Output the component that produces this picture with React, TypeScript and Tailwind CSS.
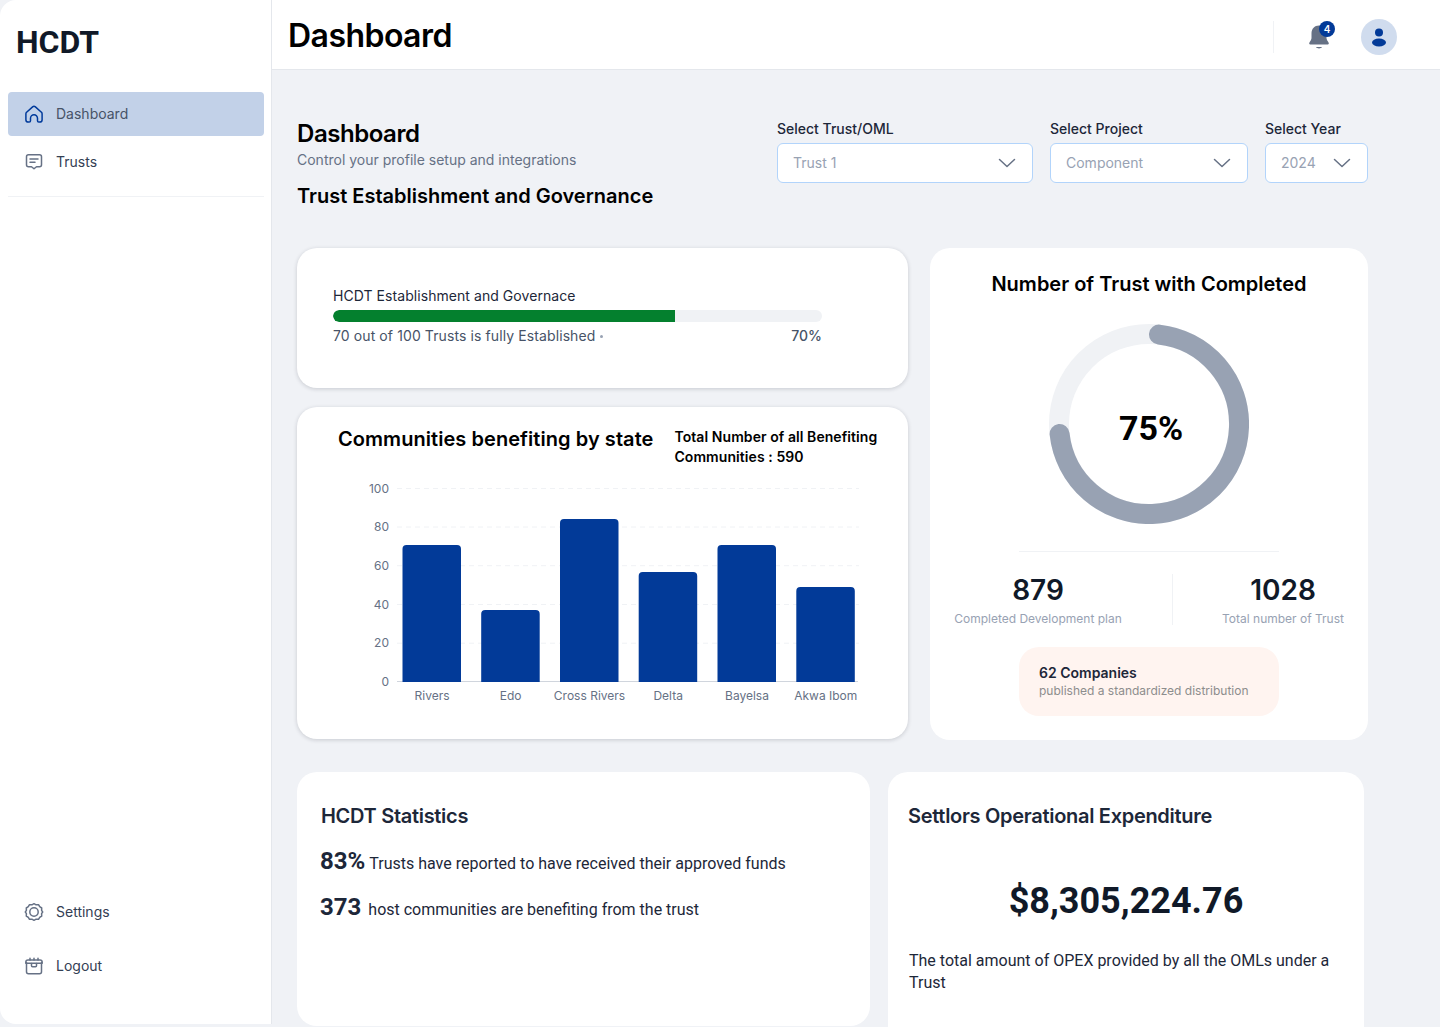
import React from 'react';

const bars = [
  { name: 'Rivers', x: 402.5, top: 545 },
  { name: 'Edo', x: 481.2, top: 610 },
  { name: 'Cross Rivers', x: 560, top: 519 },
  { name: 'Delta', x: 638.7, top: 572 },
  { name: 'Bayelsa', x: 717.5, top: 545 },
  { name: 'Akwa Ibom', x: 796.3, top: 587 },
];

const ticks = [
  { label: '100', y: 488.5 },
  { label: '80', y: 527 },
  { label: '60', y: 565.7 },
  { label: '40', y: 604.5 },
  { label: '20', y: 643.2 },
];

function HomeIcon() {
  return (
    <svg width="20" height="20" viewBox="0 0 20 20" fill="none" stroke="#003A9B" strokeWidth="1.5" strokeLinejoin="round">
      <path d="M2.6 8.2 8.6 2.9a2.1 2.1 0 0 1 2.8 0l6 5.3c.5.4.7.9.7 1.5v6c0 1.4-1 2.4-2.3 2.4h-1c-.8 0-1.3-.6-1.3-1.3v-2.6a3.5 3.5 0 0 0-7 0v2.6c0 .7-.5 1.3-1.3 1.3h-1c-1.3 0-2.3-1-2.3-2.4v-6c0-.6.2-1.1.6-1.5Z" />
    </svg>
  );
}

function TrustsIcon() {
  return (
    <svg width="20" height="20" viewBox="0 0 20 20" fill="none" stroke="#667185" strokeWidth="1.5" strokeLinecap="round" strokeLinejoin="round">
      <path d="M4.5 2.7h11c1.2 0 2 .9 2 2v8c0 1.2-.8 2-2 2h-3L10 16.8 7.5 14.7h-3c-1.2 0-2-.8-2-2v-8c0-1.1.8-2 2-2Z" />
      <path d="M6 7h8M6 10.3h5" />
    </svg>
  );
}

function SettingsIcon() {
  return (
    <svg width="20" height="20" viewBox="0 0 20 20" fill="none" stroke="#667185" strokeWidth="1.5" strokeLinejoin="round">
      <path d="M10 1.7l2.100 1.100 2.400-.1 1.200 2 2 1.300-.1 2.400L18.700 10l-1.100 1.600.1 2.400-2 1.300-1.200 2-2.400-.1-2.100 1.100-2.100-1.100-2.400.1-1.200-2-2-1.300.1-2.400L1.300 10l1.100-1.600-.1-2.400 2-1.300 1.200-2 2.400.1Z" />
      <circle cx="10" cy="10" r="4.2" />
    </svg>
  );
}

function LogoutIcon() {
  return (
    <svg width="20" height="20" viewBox="0 0 20 20" fill="none" stroke="#667185" strokeWidth="1.5" strokeLinecap="round" strokeLinejoin="round">
      <path d="M2.5 6.500v9.300c0 1.200.9 2 2 2h11c1.100 0 2-.8 2-2V6.500" />
      <path d="M1.800 6.300c0-1.300.9-2.200 2.200-2.200h12c1.300 0 2.200.9 2.200 2.200v1H1.800v-1Z" />
      <path d="M6 4V2.200M14 4V2.200M10 4V2.200" />
      <path d="M7.500 7.500v2.300c0 .6.400 1 1 1h3c.6 0 1-.4 1-1V7.500" />
    </svg>
  );
}

function BellIcon() {
  return (
    <svg width="24" height="28" viewBox="0 0 24 28" fill="#667185">
      <path d="M12 2.500c-4.400 0-7.500 3.400-7.500 7.700v4.600c0 1.300-.5 2.500-1.300 3.500-.7.900-1 1.500-1 2.100 0 .8.700 1.100 1.700 1.100h16.200c1 0 1.700-.3 1.700-1.100 0-.6-.3-1.200-1-2.100-.8-1-1.300-2.200-1.300-3.500v-4.600c0-4.300-3.100-7.700-7.500-7.700Z" />
      <path d="M9 24h6c-.6 1-1.700 1.400-3 1.400S9.600 25 9 24Z" />
    </svg>
  );
}

function Chevron() {
  return (
    <svg width="18" height="10" viewBox="0 0 18 10" fill="none" stroke="#667185" strokeWidth="1.5" strokeLinecap="round" strokeLinejoin="round">
      <path d="M1.500 1.500 9 8.500l7.500-7" />
    </svg>
  );
}

function SelectBox({ label, value, width }: { label: string; value: string; width: string }) {
  return (
    <div className={width}>
      <div className="text-sm font-medium leading-[20px] text-[#1d2739]">{label}</div>
      <div className="mt-[4px] flex h-[40px] items-center justify-between rounded-[6px] border border-[#b2d4fb] bg-white pl-[15px] pr-[16px]">
        <span className="text-sm text-[#98a2b3]">{value}</span>
        <Chevron />
      </div>
    </div>
  );
}

function Chart() {
  return (
    <svg width="530" height="250" viewBox="350 480 530 250" className="block font-[Inter,sans-serif]">
      {ticks.map((t) => (
        <g key={t.label}>
          <line x1="397" x2="859" y1={t.y} y2={t.y} stroke="#f0f2f5" strokeDasharray="5 4" />
          <text x="389" y={t.y + 4} textAnchor="end" fontSize="12" fill="#667185">{t.label}</text>
        </g>
      ))}
      <text x="389" y="686" textAnchor="end" fontSize="12" fill="#667185">0</text>
      <line x1="397" x2="858" y1="681.5" y2="681.5" stroke="#d0d5dd" />
      {bars.map((b) => (
        <g key={b.name}>
          <path
            d={`M${b.x} 682V${b.top + 4}a4 4 0 0 1 4-4H${b.x + 54.5}a4 4 0 0 1 4 4V682Z`}
            fill="#023a98"
          />
          <text x={b.x + 29.5} y="699.5" textAnchor="middle" fontSize="12" fill="#667185">{b.name}</text>
        </g>
      ))}
    </svg>
  );
}

function Donut() {
  return (
    <div className="relative mx-auto h-[200px] w-[200px]">
      <svg width="200" height="200" viewBox="0 0 200 200">
        <circle cx="100" cy="100" r="90" fill="none" stroke="#f0f2f5" strokeWidth="20" />
        <path
          d="M110 10.600A90 90 0 1 1 10.600 110"
          fill="none"
          stroke="#98a2b3"
          strokeWidth="20"
          strokeLinecap="round"
        />
      </svg>
      <div className="absolute inset-0 flex items-center justify-center pl-[4px] pt-[8px] font-[Roboto,sans-serif] text-[34px] font-bold text-black">
        75%
      </div>
    </div>
  );
}

export default function App() {
  return (
    <div className="flex h-[1027px] w-[1440px] overflow-hidden bg-[#f0f2f6] font-[Inter,sans-serif]">
      {/* Sidebar */}
      <aside className="flex h-[1024px] w-[272px] shrink-0 flex-col rounded-l-[16px] border-r border-[#e4e7ec] bg-white">
        <div className="px-[16px] pt-[22px] font-[Roboto,sans-serif] text-[32px] font-bold leading-[40px] text-[#101928]">HCDT</div>
        <nav className="mt-[30px] pl-[8px] pr-[7px]">
          <a className="flex h-[44px] items-center gap-[12px] rounded-[4px] bg-[#c2d1e8] px-[16px] text-sm text-[#475367]">
            <HomeIcon />
            Dashboard
          </a>
          <a className="mt-[4px] flex h-[44px] items-center gap-[12px] px-[16px] text-sm text-[#344054]">
            <TrustsIcon />
            Trusts
          </a>
          <div className="mt-[12px] border-t border-[#f0f2f5]" />
        </nav>
        <div className="mt-auto px-[8px] pb-[36px]">
          <a className="flex h-[44px] items-center gap-[12px] px-[16px] text-sm text-[#344054]">
            <SettingsIcon />
            Settings
          </a>
          <a className="mt-[10px] flex h-[44px] items-center gap-[12px] px-[16px] text-sm text-[#344054]">
            <LogoutIcon />
            Logout
          </a>
        </div>
      </aside>

      <div className="min-w-0 flex-1">
        {/* Header */}
        <header className="flex h-[70px] items-center justify-between border-b border-[#e4e7ec] bg-white pl-[16px] pr-[43px] pt-[3px]">
          <h1 className="text-[32px] font-semibold leading-[40px] tracking-[-0.55px] text-black">Dashboard</h1>
          <div className="mt-[2px] flex items-center">
            <div className="h-[32px] w-px bg-[#f0f2f5]" />
            <div className="relative ml-[33px] flex h-[36px] w-[24px] items-center">
              <BellIcon />
              <span className="absolute right-[-4px] top-[2px] flex h-[16px] w-[16px] items-center justify-center rounded-full bg-[#023a98] text-[10px] font-semibold text-white">
                4
              </span>
            </div>
            <div className="ml-[30px] flex h-[36px] w-[36px] items-center justify-center rounded-full bg-[#d0dcee]">
              <svg width="20" height="20" viewBox="0 0 20 20" fill="#023a98">
                <circle cx="10" cy="5.5" r="4" />
                <ellipse cx="10" cy="15.5" rx="7" ry="4" />
              </svg>
            </div>
          </div>
        </header>

        <main className="pl-[25px] pr-[72px] pt-[47px]">
          {/* Page title and filters */}
          <div className="flex items-start justify-between">
            <div className="pt-[1px]">
              <h2 className="text-2xl font-semibold leading-[32px] tracking-[-0.45px] text-black">Dashboard</h2>
              <p className="text-sm leading-[20px] text-[#667185]">Control your profile setup and integrations</p>
              <h3 className="mt-[12px] text-xl font-semibold leading-[28px] text-black">Trust Establishment and Governance</h3>
            </div>
            <div className="flex gap-[17px] pt-[2px]">
              <SelectBox label="Select Trust/OML" value="Trust 1" width="w-[256px]" />
              <SelectBox label="Select Project" value="Component" width="w-[198px]" />
              <SelectBox label="Select Year" value="2024" width="w-[103px]" />
            </div>
          </div>

          {/* Middle row */}
          <div className="mt-[38px] flex gap-[22px]">
            <div className="flex w-[611px] flex-col gap-[19px]">
              <section className="h-[140px] rounded-[20px] bg-white px-[36px] pt-[38px] shadow-[0_1px_4px_rgba(16,24,40,0.18)]">
                <div className="text-sm leading-[20px] tracking-[0.06px] text-[#1d2739]">HCDT Establishment and Governace</div>
                <div className="mt-[4px] h-[12px] w-[489px] overflow-hidden rounded-full bg-[#f0f2f5]">
                  <div className="h-full w-[70%] rounded-l-full bg-[#04802e]" />
                </div>
                <div className="mt-[4px] flex w-[489px] items-center justify-between text-sm leading-[20px] text-[#475367]">
                  <span className="flex items-center gap-[5px] tracking-[0.1px]">
                    70 out of 100 Trusts is fully Established
                    <span className="h-[3px] w-[3px] rounded-full bg-[#98a2b3]" />
                  </span>
                  <span className="font-medium">70%</span>
                </div>
              </section>

              <section className="h-[332px] rounded-[20px] bg-white pt-[20px] shadow-[0_1px_4px_rgba(16,24,40,0.18)]">
                <div className="flex pl-[41px]">
                  <div className="text-xl font-semibold leading-[24px] tracking-[0.06px] text-black">Communities benefiting by state</div>
                  <div className="ml-[21px] text-sm font-semibold leading-[20px] tracking-[0.07px] text-black">
                    Total Number of all Benefiting
                    <br />
                    Communities : 590
                  </div>
                </div>
                <div className="ml-[53px] mt-[13px]">
                  <Chart />
                </div>
              </section>
            </div>

            <section className="h-[492px] w-[438px] rounded-[20px] bg-white pt-[22px]">
              <h3 className="text-center text-xl font-semibold leading-[28px] text-black">Number of Trust with Completed</h3>
              <div className="mt-[26px]">
                <Donut />
              </div>
              <div className="mx-auto mt-[27px] w-[260px] border-t border-[#f0f2f5]" />
              <div className="mt-[22px] flex h-[51px]">
                <div className="w-[242px] pr-[26px] text-center">
                  <div className="text-[28px] font-semibold leading-[32px] text-[#101928]">879</div>
                  <div className="mt-[5px] text-xs leading-[16px] text-[#98a2b3]">Completed Development plan</div>
                </div>
                <div className="w-px bg-[#f0f2f5]" />
                <div className="flex-1 pl-[25px] text-center">
                  <div className="text-[28px] font-semibold leading-[32px] text-[#101928]">1028</div>
                  <div className="mt-[5px] text-xs leading-[16px] text-[#98a2b3]">Total number of Trust</div>
                </div>
              </div>
              <div className="mx-auto mt-[22px] h-[69px] w-[260px] rounded-[20px] bg-[#fff4f0] px-[20px] pt-[16px]">
                <div className="text-sm font-semibold leading-[20px] text-[#1d2739]">62 Companies</div>
                <div className="text-xs leading-[16px] text-[#8d8d8d]">published a standardized distribution</div>
              </div>
            </section>
          </div>

          {/* Bottom row */}
          <div className="mt-[32px] flex gap-[18px]">
            <section className="h-[254px] w-[573px] rounded-[20px] bg-white pl-[24px] pt-[30px]">
              <h3 className="text-xl font-semibold leading-[28px] tracking-[-0.3px] text-[#1d2739]">HCDT Statistics</h3>
              <p className="ml-[-1px] mt-[15px] flex items-baseline gap-[4px] font-[Roboto,sans-serif] text-base text-[#1d2739]">
                <span className="text-2xl font-bold">83%</span>
                Trusts have reported to have received their approved funds
              </p>
              <p className="ml-[-1px] mt-[14px] flex items-baseline gap-[7px] font-[Roboto,sans-serif] text-base text-[#1d2739]">
                <span className="text-2xl font-bold">373</span>
                host communities are benefiting from the trust
              </p>
            </section>
            <section className="h-[280px] w-[476px] rounded-[20px] bg-white px-[20px] pt-[30px]">
              <h3 className="text-xl font-semibold leading-[28px] tracking-[-0.3px] text-[#1d2739]">Settlors Operational Expenditure</h3>
              <div className="mt-[49px] text-center font-[Roboto,sans-serif] text-[36px] font-bold leading-[44px] text-[#101928]">$8,305,224.76</div>
              <p className="mt-[27px] pl-[1px] font-[Roboto,sans-serif] text-base leading-[22px] text-[#1d2739]">
                The total amount of OPEX provided by all the OMLs under a Trust
              </p>
            </section>
          </div>
        </main>
      </div>
    </div>
  );
}
